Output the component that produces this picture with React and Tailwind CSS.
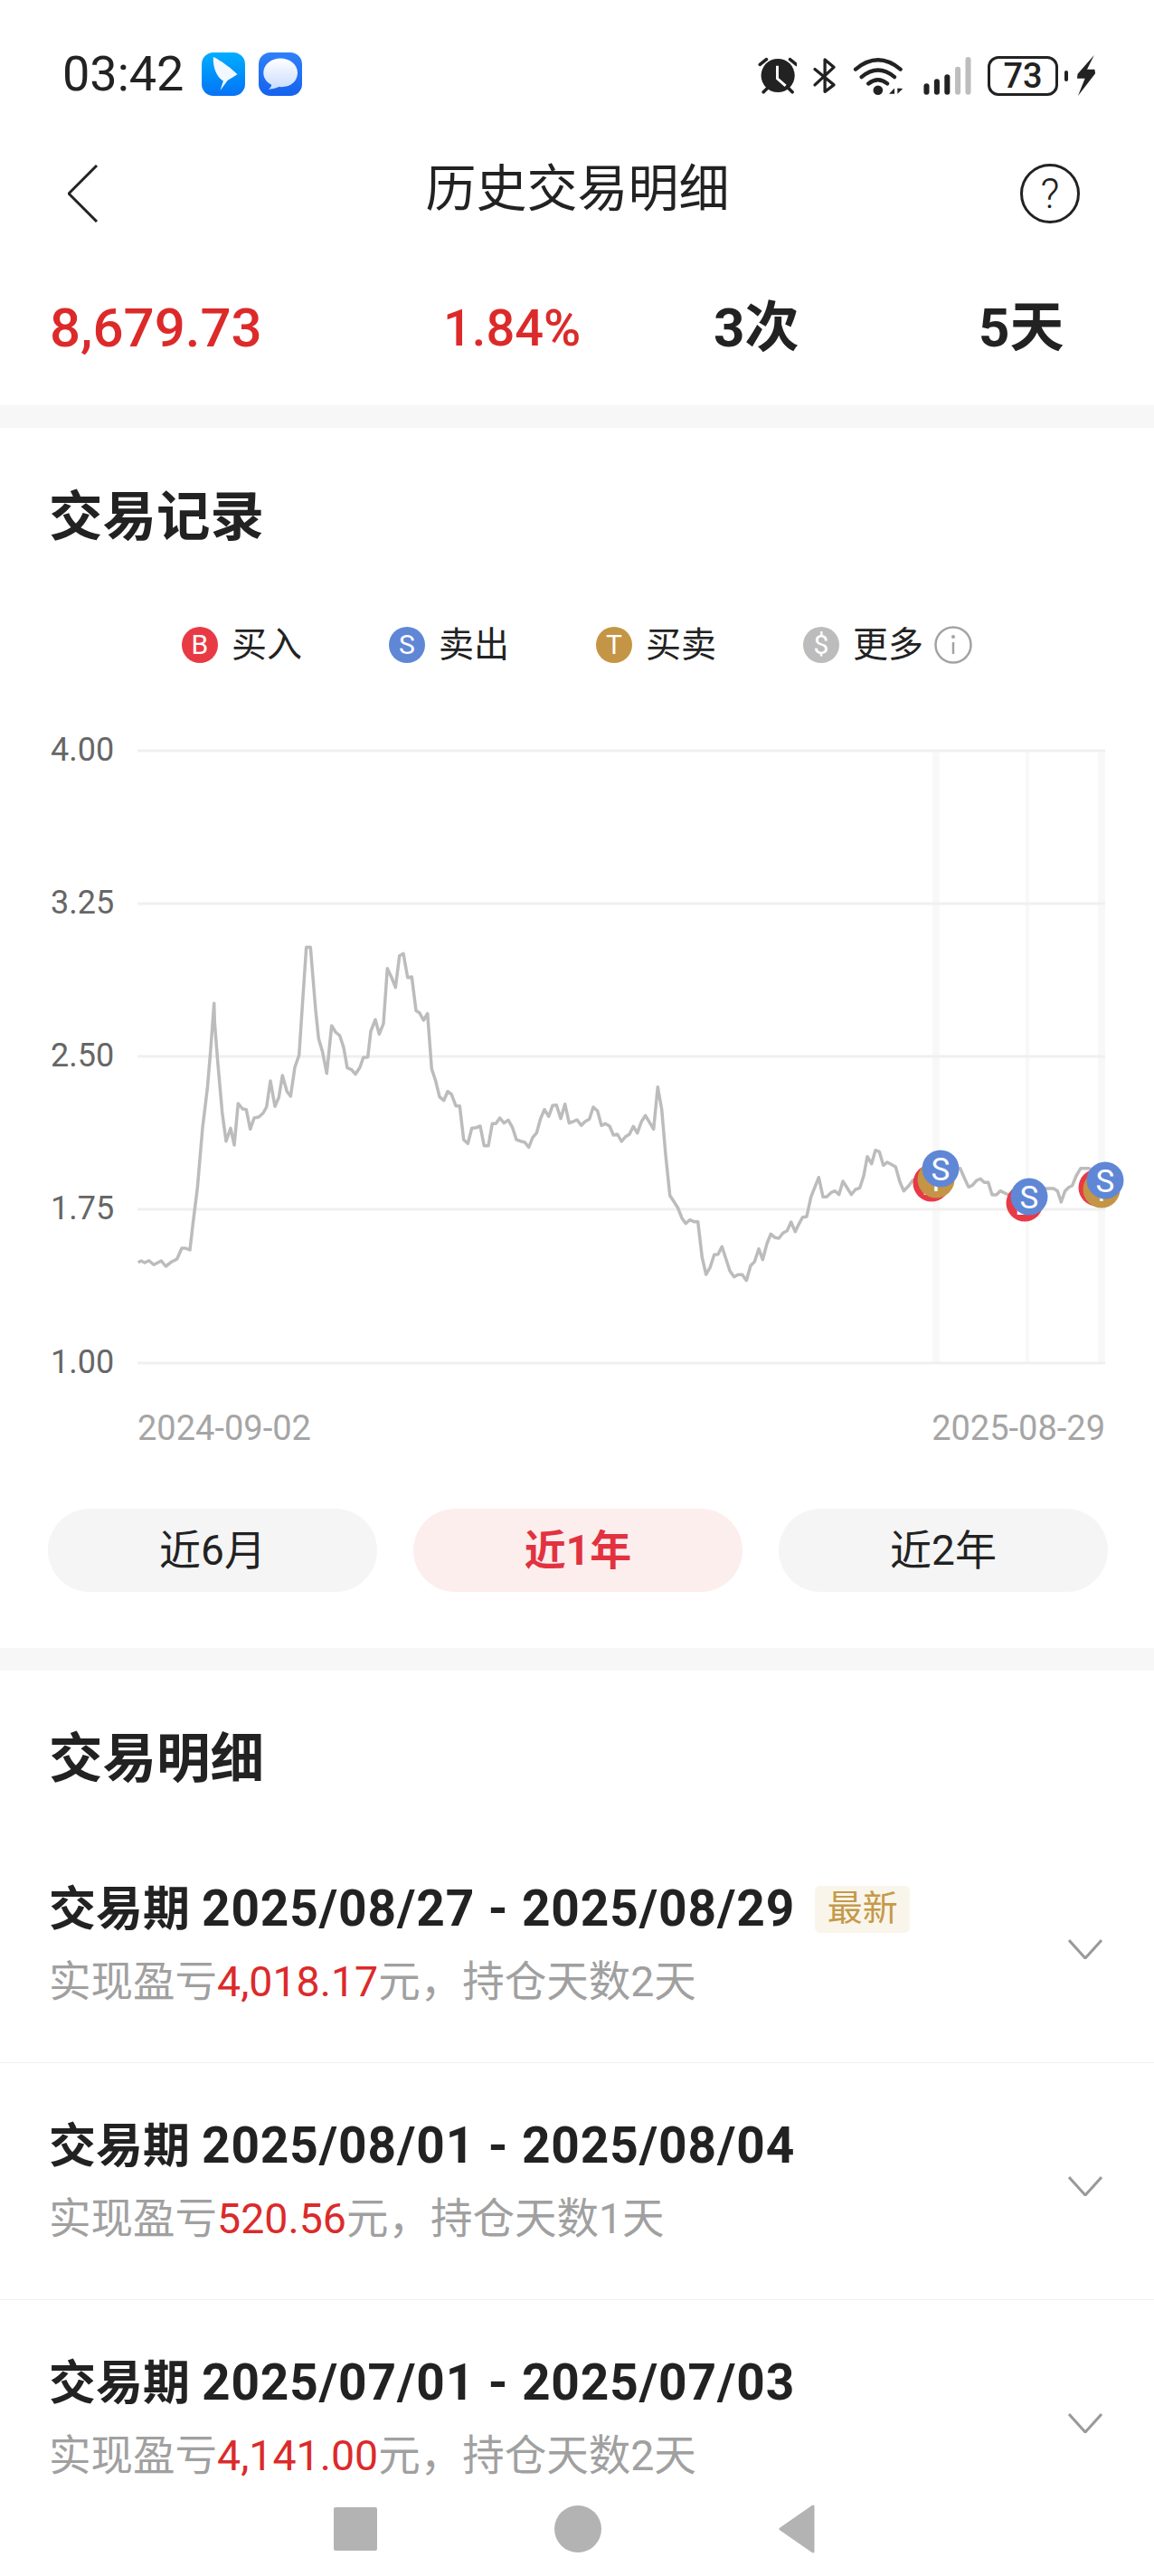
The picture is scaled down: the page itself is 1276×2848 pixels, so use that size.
import React from 'react';

const RED = 'text-[#dc2a2a]';

const seg1 = [8,1097,18,1092,30,1098,44,1091,60,1105,85,1092,100,1110,118,1096,137,1086,153,1050,165,1050,180,1056,190,970,205,850,222,650,238,520,248,400,260,238,262,300,272,430,287,600,300,695,315,652,327,708,340,570,355,588,367,590,380,655,393,618,408,615,422,603,434,582,447,495,462,580,475,550,487,477,502,530,514,546,528,450,542,410,552,260,566,52,580,52,597,260,607,355,620,400,634,470,650,312,663,333,677,345,690,385,702,452,716,458,729,473,744,450,755,418,770,416,780,330,795,292,808,340,822,305,835,122,848,150,862,185,875,80,888,73,902,152,916,150,930,262,942,270,955,294,968,272,982,455,995,495,1008,548,1022,560,1035,530,1048,540,1062,578,1075,578,1088,690,1102,703];
const seg2 = [35,652,50,650,63,645,76,710,90,710,103,637,115,637,128,618,142,635,156,625,170,650,183,690,197,695,210,698,224,715,237,683,250,668,263,620,276,590,290,613,303,577,316,575,330,620,344,572,358,635,371,630,384,624,398,643,411,630,425,622,438,582,452,595,465,643,478,637,492,645,505,675,518,672,532,696,545,680,558,672,571,646,584,668,598,630,611,610,638,655,652,515,665,590,678,740,692,875,705,895,718,915,732,950,745,968,758,956,772,962,785,962,799,1080,812,1137,825,1115,839,1072,852,1070,865,1045,891,1125,905,1145,918,1138,932,1138,946,1157,960,1108,973,1095,987,1052,1000,1088,1014,1035,1027,1003,1041,1015,1054,1017,1067,1000,1081,992,1094,963,1108,995];
const seg3 = [40,970,52,948,66,945,80,880,106,815,120,880,132,880,148,865,160,860,173,872,186,828,200,850,214,872,228,855,242,850,255,810,267,746,281,770,294,725,307,730,320,775,333,765,346,772,361,780,375,830,388,860,405,842,418,825,490,800,575,785,590,820,603,847,615,842,630,825,642,820,655,832,668,832,681,873,695,873,708,860,735,873,860,852,885,852,898,860,910,897,923,860,935,848,947,842,960,810,975,785,1000,785,1040,800];

const toPoints = (seg, offset) => {
  const out = [];
  for (let i = 0; i < seg.length; i += 2) {
    out.push(`${(offset + seg[i] / 3).toFixed(1)},${(1030 + seg[i + 1] / 3).toFixed(1)}`);
  }
  return out.join(' ');
};

const linePoints = [toPoints(seg1, 150), toPoints(seg2, 510), toPoints(seg3, 870)].join(' ');

const gridLines = [
  { y: 830, label: '4.00' },
  { y: 999, label: '3.25' },
  { y: 1168, label: '2.50' },
  { y: 1337, label: '1.75' },
  { y: 1507, label: '1.00' },
];

const Marker = ({ x, y, color, letter }) => (
  <g>
    <circle cx={x} cy={y} r="20.5" fill={color} />
    <text x={x} y={y + 12.5} textAnchor="middle" fontSize="35" fill="#fff">{letter}</text>
  </g>
);

const Chart = () => (
  <svg className="block mt-[75px]" width="1276" height="720" viewBox="0 810 1276 720">
    <rect x="1031" y="832" width="8" height="675" fill="#f8f8f8" />
    <rect x="1134" y="832" width="4" height="675" fill="#f8f8f8" />
    <rect x="1214" y="832" width="8" height="675" fill="#f8f8f8" />
    {gridLines.map((g) => (
      <g key={g.y}>
        <line x1="152" x2="1222" y1={g.y} y2={g.y} stroke="#f0f0f0" strokeWidth="3" />
        <text x="56" y={g.y + 11} fontSize="36" fill="#666666">{g.label}</text>
      </g>
    ))}
    <polyline points={linePoints} fill="none" stroke="#bcbcbc" strokeWidth="3.5" strokeLinejoin="round" />
    <Marker x={1030} y={1308} color="#e83a45" letter="B" />
    <Marker x={1035} y={1304} color="#c49545" letter="T" />
    <Marker x={1040} y={1292} color="#5f87d6" letter="S" />
    <Marker x={1133} y={1330} color="#e83a45" letter="B" />
    <Marker x={1138} y={1323} color="#5f87d6" letter="S" />
    <Marker x={1213} y={1313} color="#e83a45" letter="B" />
    <Marker x={1218} y={1315} color="#c49545" letter="T" />
    <Marker x={1222} y={1305} color="#5f87d6" letter="S" />
  </svg>
);

const StatusBar = () => (
  <div className="h-[134px] pt-[58px] pl-[69px] pr-[64px] flex items-start justify-between">
    <div className="flex items-center">
      <span className="text-[54px] leading-[48px] text-[#222]">03:42</span>
      <div className="ml-[20px] w-[48px] h-[48px] rounded-[13px] bg-gradient-to-b from-[#00aeff] to-[#0a72f5] overflow-hidden">
        <svg width="48" height="48" viewBox="553 85 145 145">
          <path d="M592 100 C615 110 655 140 672 158 L640 178 L615 212 L625 180 C600 165 590 130 592 100 Z" fill="#f2f8ff" />
        </svg>
      </div>
      <div className="ml-[15px] w-[48px] h-[48px] rounded-[13px] bg-gradient-to-b from-[#2f80f8] to-[#1462ee] overflow-hidden">
        <svg width="48" height="48" viewBox="742 85 145 145">
          <defs>
            <linearGradient id="bubble" x1="0" y1="0" x2="0" y2="1">
              <stop offset="0" stopColor="#ffffff" />
              <stop offset="1" stopColor="#c9dcff" />
            </linearGradient>
          </defs>
          <path d="M815 105 C785 105 758 125 758 153 C758 172 770 186 785 193 C785 198 781 204 775 208 C790 208 802 203 810 200 C850 203 872 180 872 153 C872 125 845 105 815 105 Z" fill="url(#bubble)" />
        </svg>
      </div>
    </div>
    <div className="flex items-center pt-[3px]">
      <svg width="44" height="43" viewBox="165 90 135 130">
        <circle cx="236" cy="155" r="57" fill="#222" />
        <path d="M234 122 V165 L262 190" fill="none" stroke="#fff" strokeWidth="9" />
        <path d="M175 118 L197 100 M277 100 L299 118 M187 211 L198 200 M285 211 L274 200" stroke="#222" strokeWidth="11" strokeLinecap="round" />
      </svg>
      <svg className="ml-[17px]" width="27" height="43" viewBox="350 88 90 135">
        <path d="M360 132 L430 190 L397 215 V97 L430 125 L360 190" fill="none" stroke="#222" strokeWidth="11" strokeLinejoin="round" strokeLinecap="round" />
      </svg>
      <svg className="ml-[17px]" width="58" height="43" viewBox="480 88 175 130">
        <path d="M492 132 Q567 70 642 132 M512 158 Q567 112 622 158 M535 180 Q567 155 598 180" fill="none" stroke="#222" strokeWidth="13" strokeLinecap="round" />
        <circle cx="567" cy="202" r="16" fill="#222" />
        <path d="M622 195 L622 214 L604 214 Z M632 195 L632 214 L650 197 Z" fill="#222" />
      </svg>
      <svg className="ml-[21px]" width="54" height="43" viewBox="725 90 160 128">
        <rect x="726" y="180" width="18" height="37" rx="9" fill="#222" />
        <rect x="760" y="165" width="18" height="52" rx="9" fill="#222" />
        <rect x="794" y="150" width="18" height="67" rx="9" fill="#222" />
        <rect x="829" y="125" width="18" height="92" rx="9" fill="#bdbdbd" />
        <rect x="863" y="93" width="18" height="124" rx="9" fill="#bdbdbd" />
      </svg>
      <div className="ml-[17px] w-[78px] h-[44px] border-[3px] border-[#222] rounded-[12px] flex items-center justify-center text-[38px] leading-none font-medium text-[#222]">73</div>
      <div className="ml-[7px] w-[4px] h-[12px] rounded-full bg-[#222]" />
      <svg className="ml-[9px]" width="22" height="45" viewBox="1232 88 60 134">
        <polygon points="1288,88 1234,150 1232,165 1258,165 1235,222 1292,148 1290,135 1265,135" fill="#222" />
      </svg>
    </div>
  </div>
);

const Header = () => (
  <div className="h-[160px] pl-[75px] pr-[82px] grid grid-cols-[1fr_auto_1fr] items-center">
    <svg width="34" height="64" viewBox="0 0 34 64">
      <polyline points="32,1 1,32 32,63" fill="none" stroke="#222" strokeWidth="3" />
    </svg>
    <h1 className="ml-[8px] mb-[10px] text-[56px] leading-none font-normal text-[#222]">历史交易明细</h1>
    <div className="justify-self-end w-[66px] h-[66px] rounded-full border-[3px] border-[#222] flex items-center justify-center text-[46px] leading-none font-light text-[#222]">?</div>
  </div>
);

const Stats = () => (
  <div className="h-[154px] pb-[16px] pl-[55px] grid grid-cols-[435px_299px_293px_1fr] items-center text-[60px] leading-none">
    <span className={`${RED} font-medium`}>8,679.73</span>
    <span className={`${RED} font-medium text-[56px]`}>1.84%</span>
    <span className="font-bold text-[#222]">3次</span>
    <span className="font-bold text-[#222]">5天</span>
  </div>
);

const legend = [
  { letter: 'B', color: 'bg-[#e83a45]', label: '买入' },
  { letter: 'S', color: 'bg-[#5f87d6]', label: '卖出' },
  { letter: 'T', color: 'bg-[#c49545]', label: '买卖' },
  { letter: '$', color: 'bg-[#bcbcbc]', label: '更多' },
];

const Legend = () => (
  <div className="mt-[89px] h-[44px] flex items-center justify-center gap-[96px]">
    {legend.map((item) => (
      <div key={item.letter} className="flex items-center">
        <span className={`w-[40px] h-[40px] rounded-full ${item.color} flex items-center justify-center text-[30px] leading-none text-white`}>{item.letter}</span>
        <span className="ml-[15px] text-[39px] leading-none text-[#222]">{item.label}</span>
      </div>
    ))}
    <svg className="-ml-[84px]" width="42" height="42" viewBox="0 0 42 42">
      <circle cx="21" cy="21" r="19.5" fill="none" stroke="#a3a3a3" strokeWidth="2.5" />
      <circle cx="21" cy="12" r="2" fill="#a3a3a3" />
      <line x1="21" y1="18" x2="21" y2="31" stroke="#a3a3a3" strokeWidth="2.5" />
    </svg>
  </div>
);

const ranges = [
  { label: '近6月' },
  { label: '近1年', active: true },
  { label: '近2年' },
];

const RangeTabs = () => (
  <div className="mt-[69px] pl-[53px] pr-[51px] grid grid-cols-3 gap-[40px]">
    {ranges.map((r) => (
      <button
        key={r.label}
        className={`h-[92px] rounded-full text-[46px] leading-none ${r.active ? 'bg-[#fdeeee] text-[#e23240] font-bold' : 'bg-[#f5f5f5] text-[#222]'}`}
      >
        {r.label}
      </button>
    ))}
  </div>
);

const trades = [
  { range: '2025/08/27 - 2025/08/29', pnl: '4,018.17', days: 2, latest: true },
  { range: '2025/08/01 - 2025/08/04', pnl: '520.56', days: 1 },
  { range: '2025/07/01 - 2025/07/03', pnl: '4,141.00', days: 2 },
];

const TradeRow = ({ trade }) => (
  <div className="h-[262px] shrink-0 pl-[54px] pr-[57px] flex items-center justify-between border-b border-[#f0f0f0]">
    <div>
      <div className="h-[60px] flex items-center">
        <span className="text-[52px] leading-none font-bold text-[#222] whitespace-nowrap">
          交易期 <span className="text-[55px] tracking-[0.9px]">{trade.range}</span>
        </span>
        {trade.latest && (
          <span className="ml-[22px] w-[105px] h-[52px] rounded-[6px] bg-[#faf5eb] text-[#c49a4a] text-[39px] leading-none flex items-center justify-center">最新</span>
        )}
      </div>
      <div className="mt-[22px] text-[46.5px] leading-[56px] text-[#a0a0a0] whitespace-nowrap">
        实现盈亏<span className={RED}>{trade.pnl}</span>元，持仓天数{trade.days}天
      </div>
    </div>
    <svg className="mt-[10px]" width="38" height="22" viewBox="0 0 38 22">
      <polyline points="1,1 19,21 37,1" fill="none" stroke="#999" strokeWidth="3" />
    </svg>
  </div>
);

const BottomNav = () => (
  <div className="h-[88px] shrink-0 pb-[16px] pr-[7px] flex items-center justify-center gap-[196px] bg-white">
    <div className="w-[48px] h-[48px] rounded-[2px] bg-[#b3b3b3]" />
    <div className="w-[52px] h-[52px] rounded-full bg-[#b3b3b3]" />
    <svg width="40" height="54" viewBox="0 0 40 54">
      <path d="M38 2 L2 27 L38 52 Z" fill="#b3b3b3" stroke="#b3b3b3" strokeWidth="3" strokeLinejoin="round" />
    </svg>
  </div>
);

export default function App() {
  return (
    <div className="w-[1276px] h-[2848px] overflow-hidden bg-white flex flex-col font-['Roboto','Noto_Sans_CJK_SC',sans-serif]">
      <div className="flex-1 min-h-0 overflow-hidden">
        <StatusBar />
        <Header />
        <Stats />
        <div className="h-[25px] bg-[#f7f7f7]" />

        {/* 交易记录 */}
        <section className="pt-[69px] pb-[62px]">
          <h2 className="pl-[54px] text-[59.5px] leading-[60px] font-bold text-[#222]">交易记录</h2>
          <Legend />
          <Chart />
          <div className="mt-[29px] h-[40px] pl-[152px] pr-[54px] flex items-center justify-between text-[38px] leading-none text-[#a5a5a5]">
            <span>2024-09-02</span>
            <span>2025-08-29</span>
          </div>
          <RangeTabs />
        </section>
        <div className="h-[25px] bg-[#f7f7f7]" />

        {/* 交易明细 */}
        <section className="pt-[68px]">
          <h2 className="pl-[54px] text-[59.5px] leading-[60px] font-bold text-[#222] mb-[44px]">交易明细</h2>
          {trades.map((t) => (
            <TradeRow key={t.range} trade={t} />
          ))}
        </section>
      </div>
      <BottomNav />
    </div>
  );
}
